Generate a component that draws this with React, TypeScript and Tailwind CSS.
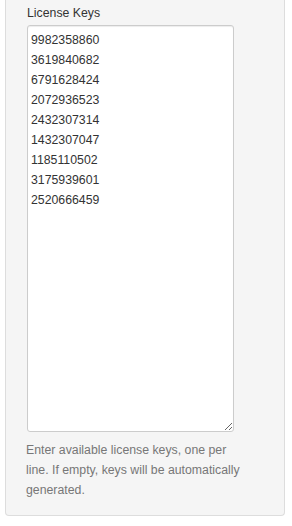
import React from "react";

const keys = [
  "9982358860",
  "3619840682",
  "6791628424",
  "2072936523",
  "2432307314",
  "1432307047",
  "1185110502",
  "3175939601",
  "2520666459",
];

export default function App() {
  return (
    <div
      className="w-[292px] h-[526px] bg-white"
      style={{ fontFamily: '"Liberation Sans", Arial, sans-serif' }}
    >
      <div className="ml-[5px] w-[280px] h-[516px] border border-t-0 border-[#dddddd] rounded-b-[4px] bg-[#f5f5f5] pt-[3px] pl-[20px]">
        <label className="block text-[12.3px] leading-[20px] text-[#333333] ml-[1px] mb-[2px]">
          License Keys
        </label>
        <textarea
          className="block w-[207px] h-[407px] ml-[1px] border border-[#cccccc] rounded-[3px] bg-white px-[3px] py-[4px] text-[12.3px] leading-[20px] text-[#333333] outline-none shadow-[inset_0_1px_1px_rgba(0,0,0,0.075)]"
          style={{ fontFamily: '"Liberation Sans", Arial, sans-serif' }}
          defaultValue={keys.join("\n")}
        />
        <p className="mt-[8px] w-[218px] text-[12.3px] leading-[20px] text-[#777777]">
          Enter available license keys, one per line. If empty, keys will be automatically generated.
        </p>
      </div>
    </div>
  );
}
